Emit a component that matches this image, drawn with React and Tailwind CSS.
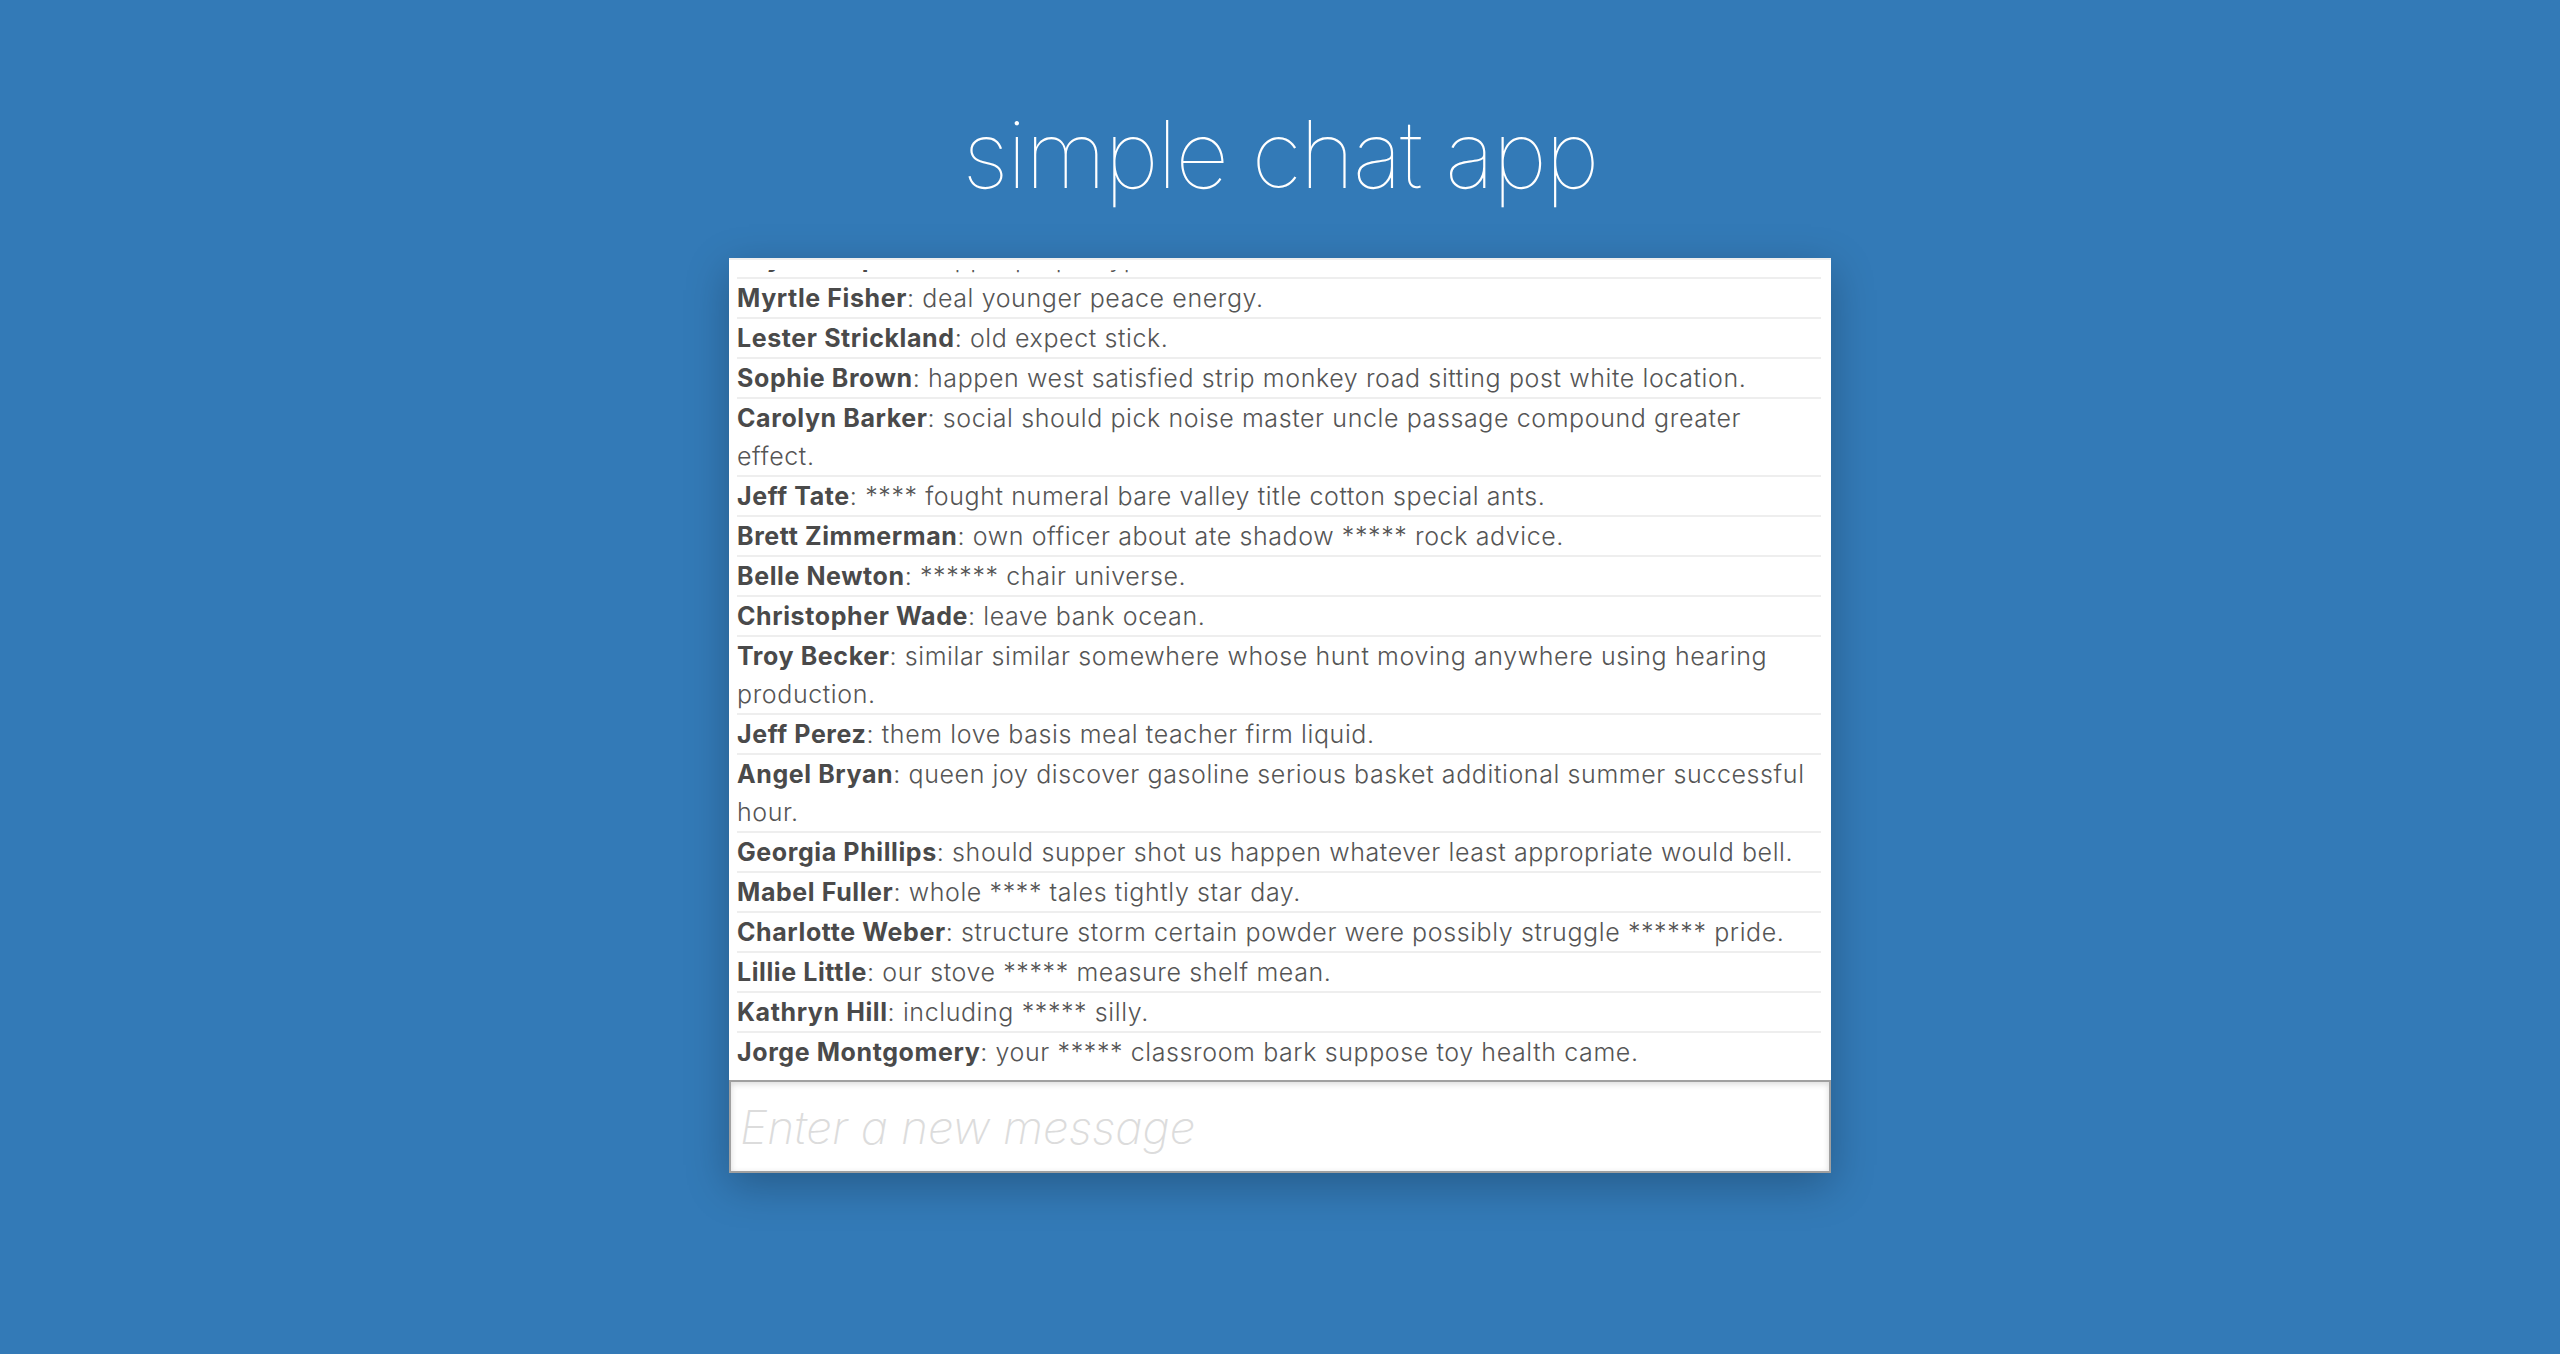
const messages = [
  ['Jay Thompson', 'apple purple type.'],
  ['Myrtle Fisher', 'deal younger peace energy.'],
  ['Lester Strickland', 'old expect stick.'],
  ['Sophie Brown', 'happen west satisfied strip monkey road sitting post white location.'],
  ['Carolyn Barker', 'social should pick noise master uncle passage compound greater effect.'],
  ['Jeff Tate', '**** fought numeral bare valley title cotton special ants.'],
  ['Brett Zimmerman', 'own officer about ate shadow ***** rock advice.'],
  ['Belle Newton', '****** chair universe.'],
  ['Christopher Wade', 'leave bank ocean.'],
  ['Troy Becker', 'similar similar somewhere whose hunt moving anywhere using hearing production.'],
  ['Jeff Perez', 'them love basis meal teacher firm liquid.'],
  ['Angel Bryan', 'queen joy discover gasoline serious basket additional summer successful hour.'],
  ['Georgia Phillips', 'should supper shot us happen whatever least appropriate would bell.'],
  ['Mabel Fuller', 'whole **** tales tightly star day.'],
  ['Charlotte Weber', 'structure storm certain powder were possibly struggle ****** pride.'],
  ['Lillie Little', 'our stove ***** measure shelf mean.'],
  ['Kathryn Hill', 'including ***** silly.'],
  ['Jorge Montgomery', 'your ***** classroom bark suppose toy health came.'],
]

export default function App() {
  return (
    <div className="flex min-h-screen flex-col items-center bg-[#337ab7] font-['Helvetica_Neue',Inter,sans-serif]">
      <h1 className="pt-[107px] text-[94px] font-thin leading-none tracking-[-2px] text-white">simple chat app</h1>

      <div className="mt-[57px] w-[1102px] border-t-2 border-[#eee] bg-white pt-[10px] shadow-[0_12px_40px_rgba(0,0,0,0.25)]">
        <div className="flex h-[810px] flex-col justify-end overflow-hidden pb-[9px] pl-2 pr-[10px]">
          <ul className="divide-y-2 divide-[#eee]">
            {messages.map(([name, text], i) => (
              <li key={i} className="text-[25px] font-light leading-[38px] tracking-[0.6px] text-[#555]">
                <b className="font-bold text-[#4a4a4a]">{name}</b>: {text}
              </li>
            ))}
          </ul>
        </div>
        <input
          className="block h-[93px] w-full border-2 border-[#a0a0a0] px-[9px] text-[46px] font-extralight italic text-[#555] shadow-[inset_0_2px_6px_rgba(0,0,0,0.15)] outline-none placeholder:text-[#dcdcdc]"
          placeholder="Enter a new message"
        />
      </div>
    </div>
  )
}
